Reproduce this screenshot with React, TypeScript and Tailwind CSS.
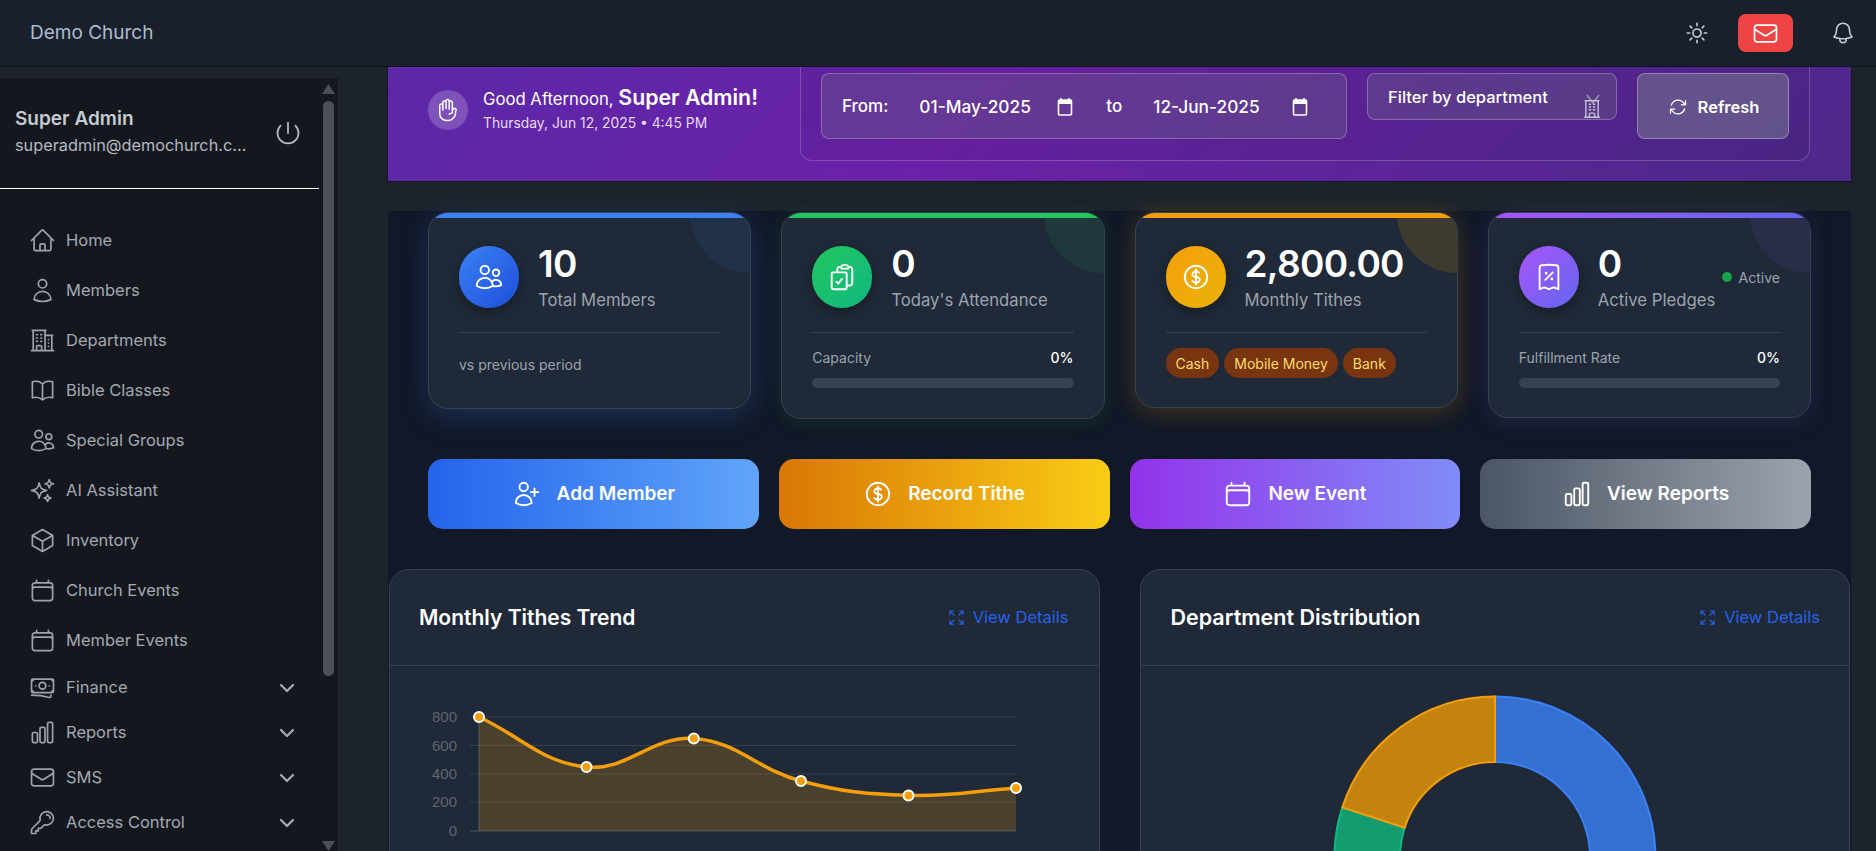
import React from "react";
import { ChevronDown } from "lucide-react";
import {
  HiOutlineHome, HiOutlineUser, HiOutlineBuildingOffice2, HiOutlineBookOpen, HiOutlineUsers, HiOutlineSparkles,
  HiOutlineCube, HiOutlineCalendar, HiOutlineBanknotes, HiOutlineChartBar, HiOutlineEnvelope, HiOutlineKey,
  HiOutlinePower, HiOutlineSun, HiOutlineBell, HiOutlineHandRaised, HiOutlineArrowPath, HiOutlineClipboardDocumentCheck,
  HiOutlineCurrencyDollar, HiOutlineReceiptPercent, HiOutlineUserPlus, HiOutlineArrowsPointingOut,
  HiOutlineBuildingOffice,
} from "react-icons/hi2";

const nav = [
  { label: "Home", Icon: HiOutlineHome },
  { label: "Members", Icon: HiOutlineUser },
  { label: "Departments", Icon: HiOutlineBuildingOffice2 },
  { label: "Bible Classes", Icon: HiOutlineBookOpen },
  { label: "Special Groups", Icon: HiOutlineUsers },
  { label: "AI Assistant", Icon: HiOutlineSparkles },
  { label: "Inventory", Icon: HiOutlineCube },
  { label: "Church Events", Icon: HiOutlineCalendar },
  { label: "Member Events", Icon: HiOutlineCalendar },
];
const navMore = [
  { label: "Finance", Icon: HiOutlineBanknotes },
  { label: "Reports", Icon: HiOutlineChartBar },
  { label: "SMS", Icon: HiOutlineEnvelope },
  { label: "Access Control", Icon: HiOutlineKey },
];

function DateIcon() {
  return (
    <svg width="16" height="18" viewBox="0 0 16 18" fill="none" className="shrink-0">
      <path d="M4 0v3M12 0v3" stroke="white" strokeWidth="1.6" />
      <rect x="1.5" y="2" width="13" height="15" rx="1" stroke="white" strokeWidth="1.6" />
      <rect x="1.5" y="2" width="13" height="4" fill="white" />
    </svg>
  );
}

function Sidebar() {
  return (
    <aside className="mt-[11px] flex h-[773px] w-[338px] shrink-0 overflow-hidden bg-[#14181e]">
      <div className="w-[319px] shrink-0">
        <div className="flex h-[111px] items-center justify-between border-b border-white pl-[15px] pr-[15px]">
          <div className="-mt-[3px]">
            <div className="text-[19px] leading-[26px] font-semibold text-[#c5cad3]">Super Admin</div>
            <div className="mt-px text-[16.3px] leading-[25px] text-[#b4b9c2]">superadmin@demochurch.c...</div>
          </div>
          <HiOutlinePower className="mr-[2px] text-[#b4b9c2]" size={28} />
        </div>
        <nav className="pt-[26px]">
          {nav.map(({ label, Icon }) => (
            <div key={label} className="flex h-[50px] items-center gap-[10px] pl-[29px] text-[16.5px] text-[#a3a8b2]">
              <Icon size={27} className="shrink-0 text-[#9ca3af]" />
              <span>{label}</span>
            </div>
          ))}
          {navMore.map(({ label, Icon }) => (
            <div key={label} className="flex h-[45px] items-center gap-[10px] pl-[29px] pr-[20px] text-[16.5px] text-[#a3a8b2]">
              <Icon size={27} className="shrink-0 text-[#9ca3af]" />
              <span className="flex-1">{label}</span>
              <ChevronDown size={24} strokeWidth={2.3} className="text-[#a3a8b2]" />
            </div>
          ))}
        </nav>
      </div>
      <div className="flex flex-1 flex-col items-center pl-[3px] pr-[5px]">
        <svg width="13" height="10" viewBox="0 0 13 10" className="mt-[6px] shrink-0"><path d="M6.5 0L13 10H0Z" fill="#4b5058" /></svg>
        <div className="mt-[7px] h-[575px] w-[11px] shrink-0 rounded-full bg-[#4b5058]" />
        <svg width="13" height="10" viewBox="0 0 13 10" className="mt-auto shrink-0"><path d="M0 0H13L6.5 10Z" fill="#4b5058" /></svg>
      </div>
    </aside>
  );
}

function Banner() {
  return (
    <section className="flex h-[115px] items-start justify-between overflow-hidden border border-t-0 border-[#14181e] bg-[linear-gradient(135deg,#5b28a8_0%,#6b21a8_40%,#4c2889_100%)] pl-[40px] pr-[41px]">
      <div className="mt-[20px] flex items-center gap-[15px]">
        <div className="flex h-10 w-10 items-center justify-center rounded-full bg-white/20">
          <HiOutlineHandRaised size={24} className="text-white" />
        </div>
        <div className="-mt-[2px]">
          <div className="text-[16.7px] leading-[24px] text-white">Good Afternoon, <span className="text-[21.3px] font-semibold">Super Admin!</span></div>
          <div className="mt-[3px] text-[13.85px] leading-[18px] text-[#e9dcf7]">Thursday, Jun 12, 2025 • 4:45 PM</div>
        </div>
      </div>
      <div className="-mt-[15px] flex h-[109px] w-[1010px] gap-5 rounded-xl border border-white/20 bg-black/5 px-5 pt-[20px]">
        <div className="flex h-[66px] w-[526px] items-center rounded-lg border border-white/25 bg-[#6b7280]/30 pl-[20px] pt-[2px] text-[17px] font-medium text-white">
          <span>From:</span>
          <span className="ml-[31px] w-[118px] text-[17.3px]">01-May-2025</span>
          <span className="ml-[20px]"><DateIcon /></span>
          <span className="ml-[33px]">to</span>
          <span className="ml-[31px] w-[118px] text-[17.3px]">12-Jun-2025</span>
          <span className="ml-[21px]"><DateIcon /></span>
        </div>
        <div className="relative flex h-[47px] w-[250px] items-center rounded-lg border border-white/25 bg-[#6b7280]/30 pl-[20px] pt-px text-[16.5px] font-medium text-white">
          Filter by department
          <svg width="14" height="10" viewBox="0 0 14 10" className="absolute left-[218px] top-[20px]" fill="none"><path d="M1 1l6 8 6-8" stroke="#9ca3af" strokeWidth="1.4" /></svg>
          <HiOutlineBuildingOffice size={22} className="absolute left-[213px] top-[24px] text-[#c8c0d8]" />
        </div>
        <div className="flex h-[66px] flex-1 items-center justify-center gap-[10px] rounded-lg border border-white/30 bg-[#7a8090]/50 pt-[2px] pl-px text-[16.5px] font-semibold text-white">
          <HiOutlineArrowPath size={20} /> Refresh
        </div>
      </div>
    </section>
  );
}

function Progress({ label }: { label: string }) {
  return (
    <div className="pt-[16px]">
      <div className="flex items-center justify-between text-[14px] leading-[18px] text-[#9ca3af]">
        <span>{label}</span><span className="font-medium text-white">0%</span>
      </div>
      <div className="mt-[11px] h-[10px] rounded-full bg-[#374151]" />
    </div>
  );
}

function StatCard({ value, label, circle, bar, corner, glow, Icon, right, children }: any) {
  return (
    <div className={"relative overflow-hidden rounded-[20px] border border-[#374151] bg-[#1f2937] px-[30px] pt-[33px] " + glow}>
      <div className={"absolute -top-[60px] -right-[60px] h-[120px] w-[120px] rounded-full " + corner} />
      <div className={"absolute inset-x-0 top-0 h-[5px] " + bar} />
      <div className="relative flex h-[62px] items-start gap-[19px]">
        <div className={"flex h-[62px] w-[60px] shrink-0 items-center justify-center rounded-full shadow-[0_4px_12px_rgba(0,0,0,0.3)] " + circle}>
          <Icon size={30} className="text-white" />
        </div>
        <div className="-mt-[2px] min-w-0 flex-1 whitespace-nowrap">
          <div className="text-[37px] leading-[40px] font-semibold tracking-[-0.7px] text-white">{value}</div>
          <div className="mt-[5px] text-[16.7px] leading-[22px] text-[#9ca3af]">{label}</div>
        </div>
        {right}
      </div>
      <div className="mt-[24px] border-t border-[#374151]">{children}</div>
    </div>
  );
}

function Stats() {
  return (
    <div className="grid grid-cols-4 items-start gap-[30px] px-10">
      <StatCard value="10" label="Total Members" Icon={HiOutlineUsers} circle="bg-[linear-gradient(135deg,#3b82f6,#1d4ed8)]" bar="bg-[#3b82f6]" corner="bg-[#3b82f6]/10" glow="shadow-[0_8px_30px_rgba(59,130,246,0.22)]">
        <div className="h-[75px] pt-[23px] text-[14px] leading-[18px] text-[#9ca3af]">vs previous period</div>
      </StatCard>
      <StatCard value="0" label="Today's Attendance" Icon={HiOutlineClipboardDocumentCheck} circle="bg-[linear-gradient(135deg,#22c55e,#10b981)]" bar="bg-[#22c55e]" corner="bg-[#22c55e]/10" glow="shadow-[0_4px_20px_rgba(34,197,94,0.12)]">
        <div className="h-[85px]"><Progress label="Capacity" /></div>
      </StatCard>
      <StatCard value="2,800.00" label="Monthly Tithes" Icon={HiOutlineCurrencyDollar} circle="bg-[linear-gradient(135deg,#f59e0b,#eab308)]" bar="bg-[#f59e0b]" corner="bg-[#f59e0b]/15" glow="shadow-[0_4px_25px_rgba(245,158,11,0.22)]">
        <div className="flex h-[74px] gap-[5px] pt-[15px] text-[14px] text-[#fcdc6a]">
          {["Cash", "Mobile Money", "Bank"].map((t) => (
            <span key={t} className="flex h-[30px] items-center rounded-full bg-[#78350f] px-[10px]">{t}</span>
          ))}
        </div>
      </StatCard>
      <StatCard value="0" label="Active Pledges" Icon={HiOutlineReceiptPercent} circle="bg-[linear-gradient(135deg,#a855f7,#6366f1)]" bar="bg-[linear-gradient(90deg,#a855f7,#6366f1)]" corner="bg-[#8b5cf6]/10" glow="shadow-[0_4px_25px_rgba(139,92,246,0.15)]"
        right={<div className="flex items-center gap-[7px] self-center text-[14px] text-[#9ca3af]"><span className="h-[10px] w-[10px] rounded-full bg-[#16a34a]" />Active</div>}>
        <div className="h-[84px]"><Progress label="Fulfillment Rate" /></div>
      </StatCard>
    </div>
  );
}

function Actions() {
  const items = [
    { label: "Add Member", Icon: HiOutlineUserPlus, bg: "bg-[linear-gradient(90deg,#2563eb,#60a5fa)]" },
    { label: "Record Tithe", Icon: HiOutlineCurrencyDollar, bg: "bg-[linear-gradient(90deg,#d97706,#facc15)]" },
    { label: "New Event", Icon: HiOutlineCalendar, bg: "bg-[linear-gradient(90deg,#9333ea,#818cf8)]" },
    { label: "View Reports", Icon: HiOutlineChartBar, bg: "bg-[linear-gradient(90deg,#4b5563,#9ca3af)]" },
  ];
  return (
    <div className="mt-10 grid grid-cols-4 gap-5 px-10">
      {items.map(({ label, Icon, bg }) => (
        <div key={label} className={"flex h-[70px] items-center justify-center gap-[15px] rounded-[15px] text-[19px] font-semibold text-white " + bg}>
          <Icon size={30} />
          {label}
        </div>
      ))}
    </div>
  );
}

function linePath() {
  const pts = [[479, 717], [586.5, 767], [693.8, 738.4], [801, 781], [908.5, 795.4], [1016, 788]].map(([x, y]) => [x - 390, y - 666]);
  const t = 0.4;
  const cp = pts.map((p, i) => {
    const a = pts[i - 1] || p;
    const b = pts[i + 1] || p;
    const d1 = Math.hypot(p[0] - a[0], p[1] - a[1]);
    const d2 = Math.hypot(b[0] - p[0], b[1] - p[1]);
    const s = d1 + d2 || 1;
    return {
      inX: p[0] - ((t * d1) / s) * (b[0] - a[0]),
      inY: p[1] - ((t * d1) / s) * (b[1] - a[1]),
      outX: p[0] + ((t * d2) / s) * (b[0] - a[0]),
      outY: p[1] + ((t * d2) / s) * (b[1] - a[1]),
    };
  });
  let d = `M${pts[0][0]} ${pts[0][1]}`;
  for (let i = 1; i < pts.length; i++) {
    d += ` C${cp[i - 1].outX} ${cp[i - 1].outY} ${cp[i].inX} ${cp[i].inY} ${pts[i][0]} ${pts[i][1]}`;
  }
  return { d, pts };
}

function LineChart() {
  const { d, pts } = linePath();
  const ticks = [["800", 51], ["600", 79.5], ["400", 108], ["200", 136], ["0", 165]] as const;
  return (
    <svg width="708" height="190" viewBox="0 0 708 190" className="block">
      {ticks.map(([l, y]) => (
        <g key={l}>
          <line x1="80" x2="626" y1={y} y2={y} stroke={l === "0" ? "#4b5563" : "#374151"} strokeWidth="1" />
          <text x="67" y={y + 5} textAnchor="end" fontSize="15" fill="#5f6670" fontFamily="Liberation Sans, sans-serif">{l}</text>
        </g>
      ))}
      <line x1="89" x2="89" y1="51" y2="165" stroke="#4b5563" />
      <path d={`${d} L626 165 L89 165 Z`} fill="rgba(245,158,11,0.2)" />
      <path d={d} fill="none" stroke="#f59e0b" strokeWidth="3.5" />
      {pts.map(([x, y]) => <circle key={x} cx={x} cy={y} r="5" fill="#f59e0b" stroke="white" strokeWidth="2" />)}
    </svg>
  );
}

function Donut() {
  const cx = 354, cy = 191, R = 160.5, r = 95;
  const arc = (a0: number, a1: number) => {
    const p = (rad: number, a: number) => {
      const t = ((a - 90) * Math.PI) / 180;
      return `${cx + rad * Math.cos(t)} ${cy + rad * Math.sin(t)}`;
    };
    const large = a1 - a0 > 180 ? 1 : 0;
    return `M${p(R, a0)} A${R} ${R} 0 ${large} 1 ${p(R, a1)} L${p(r, a1)} A${r} ${r} 0 ${large} 0 ${p(r, a0)} Z`;
  };
  return (
    <svg width="708" height="190" viewBox="0 0 708 190" className="block">
      <path d={arc(0, 180)} fill="#346fd1" stroke="#3b82f6" strokeWidth="2" />
      <path d={arc(180, 288)} fill="#129c70" stroke="#10b981" strokeWidth="2" />
      <path d={arc(288, 360)} fill="#c4820f" stroke="#f59e0b" strokeWidth="2" />
    </svg>
  );
}

function ChartCard({ title, pad, size, children }: { title: string; pad: string; size: string; children: React.ReactNode }) {
  return (
    <div className="overflow-hidden rounded-t-[20px] border border-[#374151] bg-[#1f2937]">
      <div className={"flex h-[96px] items-center justify-between border-b border-[#374151] " + pad}>
        <h3 className={"font-semibold text-white " + size}>{title}</h3>
        <div className="flex items-center gap-[7px] text-[16.5px] text-[#2563eb]">
          <HiOutlineArrowsPointingOut size={19} /> View Details
        </div>
      </div>
      {children}
    </div>
  );
}

export default function App() {
  return (
    <div className="flex h-screen flex-col overflow-hidden bg-[#1c232b] [font-family:Inter,sans-serif]">
      <header className="flex h-[67px] shrink-0 items-center justify-between border-b border-[#0f1319] bg-[#1a202b] pl-[30px] pr-[20px]">
        <span className="text-[19px] text-[#a9bdd0]">Demo Church</span>
        <div className="flex items-center">
          <HiOutlineSun size={26} className="text-[#c5cad3]" />
          <div className="ml-[28px] flex h-[38px] w-[55px] items-center justify-center rounded-lg bg-[#ef4444]">
            <HiOutlineEnvelope size={27} className="text-white" />
          </div>
          <HiOutlineBell size={26} className="ml-[37px] text-[#c5cad3]" />
        </div>
      </header>
      <div className="flex min-h-0 flex-1">
        <Sidebar />
        <main className="ml-[49px] w-[1465px] shrink-0">
          <Banner />
          <div className="mx-px mt-[29px] h-[700px] bg-[#111827] pt-px">
            <Stats />
            <Actions />
            <div className="mx-px mt-10 grid grid-cols-2 gap-10">
              <ChartCard title="Monthly Tithes Trend" size="text-[21px]" pad="pl-[29px] pr-[30px]"><LineChart /></ChartCard>
              <ChartCard title="Department Distribution" size="text-[21.5px]" pad="pl-[30px] pr-[29px]"><Donut /></ChartCard>
            </div>
          </div>
        </main>
      </div>
    </div>
  );
}
